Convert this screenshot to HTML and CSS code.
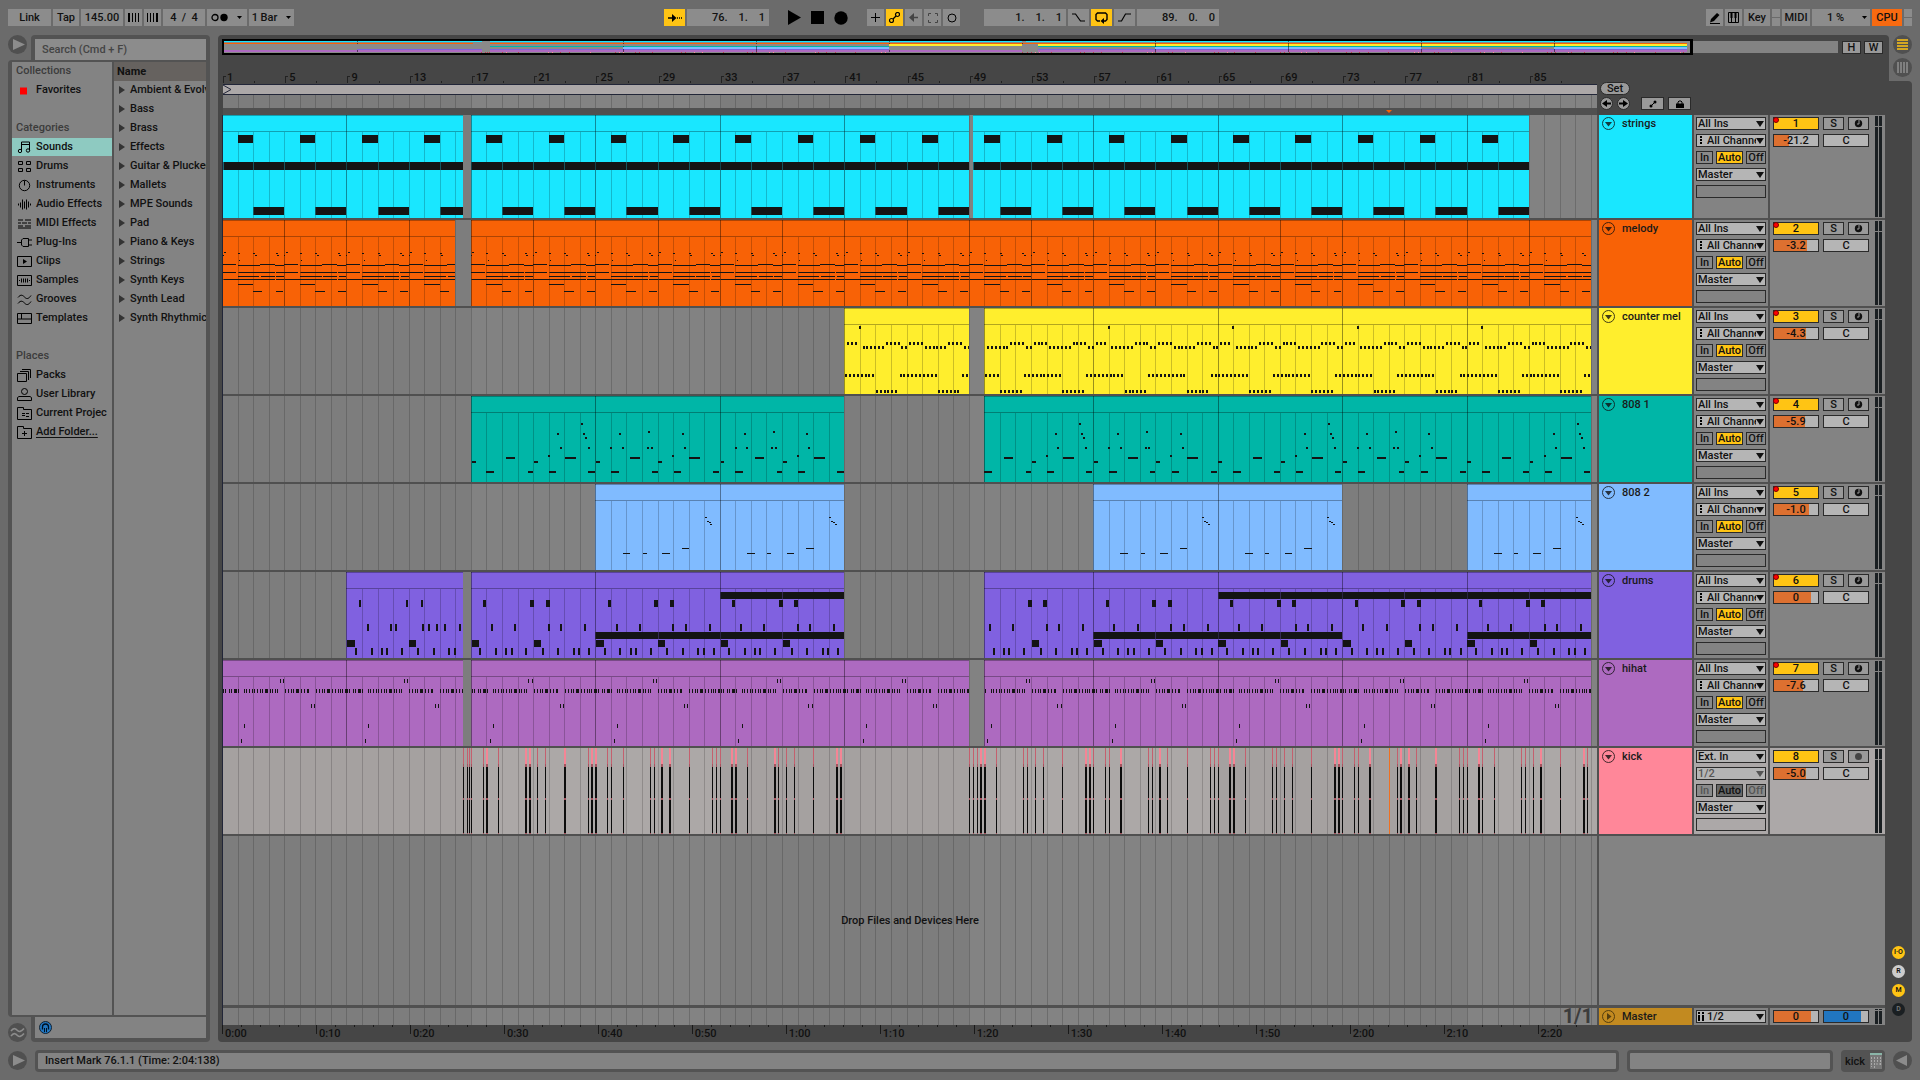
FILE: index.html
```html
<!DOCTYPE html>
<html lang="en">
<head>
<meta charset="utf-8">
<title>Arrangement</title>
<link rel="stylesheet" href="styles.css">
</head>
<body>
<header class="topbar">
  <div class="group">
    <button class="ctl w43">Link</button>
    <button class="ctl w26">Tap</button>
    <input class="ctl w42" aria-label="Tempo" value="145.00">
    <button class="ctl w17" aria-label="Nudge down"><svg width="11" height="9"><path d="M1 0v9M4.500 0v9M7.500 0v9M10.500 0v9" stroke="#000"/><path d="M1 0v9" stroke="#000" stroke-width="2"/></svg></button>
    <button class="ctl w17" aria-label="Nudge up"><svg width="11" height="9"><path d="M.5 0v9M3.500 0v9M6.500 0v9" stroke="#000"/><path d="M10 0v9" stroke="#000" stroke-width="2"/></svg></button>
    <input class="ctl w42" aria-label="Time signature" value="4  /  4">
    <button class="ctl w40" aria-label="Metronome"><svg width="32" height="9"><circle cx="4" cy="4.500" r="3" fill="none" stroke="#000" stroke-width="1.300"/><circle cx="13" cy="4.500" r="3.700"/><path d="M26 3h5l-2.500 3z"/></svg></button>
    <button class="ctl w45">1 Bar<svg class="after" width="5" height="4"><path d="M0 0h5l-2.500 3z"/></svg></button>
  </div>
  <div class="space-a"></div>
  <div class="group">
    <button class="ctl w21 on" aria-label="Follow"><svg width="14" height="10"><path d="M0 5h6M9 5h1M11 5h1M13 5h1" stroke="#000" stroke-width="1.500"/><path d="M4 1l4.500 4L4 9z"/></svg></button>
    <input class="ctl w82 num" aria-label="Position" value="76.    1.    1">
    <div class="transport">
      <button class="bare" aria-label="Play"><svg width="13" height="15"><path d="M0 0l13 7.500L0 15z"/></svg></button>
      <button class="bare" aria-label="Stop"><svg width="13" height="13"><path d="M0 0h13v13H0z"/></svg></button>
      <button class="bare" aria-label="Record"><svg width="14" height="14"><circle cx="7" cy="7" r="6.700"/></svg></button>
    </div>
    <button class="ctl w17" aria-label="Overdub"><svg width="9" height="9"><path d="M4.500 0v9M0 4.500h9" stroke="#000"/></svg></button>
    <button class="ctl w17 on" aria-label="Automation arm"><svg width="11" height="11" fill="none" stroke="#000" stroke-width="1.200"><circle cx="2.500" cy="8.500" r="2"/><circle cx="8.500" cy="2.500" r="2"/><path d="M4 7l3-3"/></svg></button>
    <button class="ctl w17" aria-label="Re-enable automation"><svg width="9" height="9"><path d="M2 4.500h7" stroke="#444" stroke-width="1.500"/><path d="M5 0v9L0 4.500z" fill="#444"/></svg></button>
    <button class="ctl w17" aria-label="Capture"><svg width="10" height="10"><path d="M.5 3V.5H3M7 .5h2.500V3M9.500 7v2.500H7M3 9.500H.5V7" fill="none" stroke="#444"/></svg></button>
    <button class="ctl w17" aria-label="Session record"><svg width="10" height="10"><circle cx="5" cy="5" r="4" fill="none" stroke="#000"/></svg></button>
    <div class="gap20"></div>
    <input class="ctl w82 num" aria-label="Loop start" value="1.    1.    1">
    <button class="ctl w21" aria-label="Punch in"><svg width="13" height="9"><path d="M0 1h3.500l5 7H13" fill="none" stroke="#000" stroke-width="1.200"/></svg></button>
    <button class="ctl w21 on" aria-label="Loop"><svg width="13" height="12"><path d="M5 9H2.500L1 7.500V2.500L2.500 1h8L12 2.500v5L10.500 9H8" fill="none" stroke="#000" stroke-width="1.400"/><path d="M9 6v6L5.500 9z"/></svg></button>
    <button class="ctl w21" aria-label="Punch out"><svg width="13" height="9"><path d="M0 8h3.500l4-7H13" fill="none" stroke="#000" stroke-width="1.200"/></svg></button>
    <input class="ctl w82 num" aria-label="Loop length" value="89.    0.    0">
  </div>
  <div class="space-b"></div>
  <div class="group">
    <button class="ctl w17" aria-label="Draw mode"><svg width="12" height="12"><path d="M1 10.500l1-3.500L8 1l2.500 2L5 9z"/><path d="M1 11.500h10" stroke="#000"/></svg></button>
    <button class="ctl w17" aria-label="Computer keyboard"><svg width="11" height="11"><path d="M.5.5h10v10H.5z" fill="none" stroke="#000"/><path d="M2.500 0h2v6h-2zM6.500 0h2v6h-2zM3 6h1v5H3zM7 6h1v5H7z"/></svg></button>
    <button class="ctl w26">Key</button>
    <div class="leds"><i></i><i></i></div>
    <button class="ctl w28">MIDI</button>
    <button class="ctl w58 load">1 %<svg width="5" height="4"><path d="M0 0h5l-2.500 3z"/></svg></button>
    <button class="ctl w30 cpu">CPU</button>
    <div class="leds"><i></i><i></i></div>
  </div>
</header>

<main class="main">
  <aside class="browser">
    <div class="btop">
      <button class="round" aria-label="Hide browser"><svg width="19" height="19"><path d="M5 4l12 5.500L5 15z" fill="#8c8c8c"/></svg></button>
      <div class="tab"><input class="search" aria-label="Search" placeholder="Search (Cmd + F)"></div>
    </div>
    <div class="panes">
      <ul class="pane places">
        <li class="head">Collections</li>
        <li><svg class="ic" viewBox="0 0 15 12"><path d="M3 3h7v7H3z" fill="#f00" stroke="none"/></svg>Favorites</li>
        <li></li>
        <li class="head">Categories</li>
        <li class="sel"><svg class="ic" viewBox="0 0 15 12"><circle cx="3" cy="9.500" r="1.700"/><circle cx="11" cy="9" r="1.700"/><path d="M4.500 9.500v-9h8V9M4.500 3h8"/></svg>Sounds</li>
        <li><svg class="ic" viewBox="0 0 15 12"><path d="M1.500 1h4v3h-4zM9.500 1h4v3h-4zM1.500 8h4v3h-4zM9.500 8h4v3h-4z"/></svg>Drums</li>
        <li><svg class="ic" viewBox="0 0 15 12"><circle cx="7.500" cy="6" r="5.200"/><path d="M7.500 1v5"/></svg>Instruments</li>
        <li><svg class="ic" viewBox="0 0 15 12"><path d="M1.500 5v2M3.500 4v5M5.500 1v10M7.500 3v7M9.500 1v10M11.500 3v6M13.500 5v2"/></svg>Audio Effects</li>
        <li><svg class="ic" viewBox="0 0 15 12"><path d="M1 2.500h5M8 2.500h6M1 5.500h3M5 5.500h5M11 5.500h3M1 8.500h5M1 10.500h13M8 8.500h6"/></svg>MIDI Effects</li>
        <li><svg class="ic" viewBox="0 0 15 12"><path d="M0 6h4.500M11 3.500h4M11 8.500h4M11.500 2H6L4.500 3.500v5L6 10h5.500z"/></svg>Plug-Ins</li>
        <li><svg class="ic" viewBox="0 0 15 12"><path d="M.5 1h14v10H.5z"/><path d="M6 3.500L10 6 6 8.500z" fill="#000" stroke="none"/></svg>Clips</li>
        <li><svg class="ic" viewBox="0 0 15 12"><path d="M.5 1h14v10H.5zM2.500 5.500v1M4.500 4v4M6.500 4v4M8.500 4v4M10.500 4v4M12.500 5.500v1"/></svg>Samples</li>
        <li><svg class="ic" viewBox="0 0 15 12"><path d="M1 4c3-4 5-2 7 0s4 1 6-2M1 10c3-4 5-2 7 0s4 1 6-2"/></svg>Grooves</li>
        <li><svg class="ic" viewBox="0 0 15 12"><path d="M.5 1h14v10H.5zM.5 6.500h14M4.500 1v5.500"/></svg>Templates</li>
        <li></li>
        <li class="head">Places</li>
        <li><svg class="ic" viewBox="0 0 15 13"><path d="M.5 4.500h9v8h-9zM3 2.500h8.500V11M5 .5h8.500V9"/></svg>Packs</li>
        <li><svg class="ic" viewBox="0 0 15 13"><circle cx="7.500" cy="3.500" r="3"/><path d="M.5 12.500v-3L2 8.500h11l1.500 1v3z"/></svg>User Library</li>
        <li><svg class="ic" viewBox="0 0 15 13"><path d="M.5 12.500V.5h6v2h8v10zM5 6.500h3M9 6.500h3M5 8.500h3M9 9.500h3"/></svg>Current Projec</li>
        <li><svg class="ic" viewBox="0 0 15 13"><path d="M.5 12.500V.5h6v2h8v10zM7.500 5v5M5 7.500h5"/></svg><a class="add" href="#add">Add Folder...</a></li>
      </ul>
      <ul class="pane names">
        <li class="title">Name</li>
        <li>Ambient &amp; Evolving</li><li>Bass</li><li>Brass</li><li>Effects</li><li>Guitar &amp; Plucked</li><li>Mallets</li><li>MPE Sounds</li><li>Pad</li><li>Piano &amp; Keys</li><li>Strings</li><li>Synth Keys</li><li>Synth Lead</li><li>Synth Rhythmic</li>
      </ul>
    </div>
    <div class="bbot">
      <button class="round" aria-label="Groove pool"><svg width="19" height="19" fill="none" stroke="#8c8c8c" stroke-width="1.600"><path d="M3 8c3-4 5-2 6.500-.5S13 9 16 5.500M3 13c3-4 5-2 6.500-.5s3.500 1.500 6.500-2"/></svg></button>
      <div class="tab low"><div class="preview"><button class="bare" aria-label="Preview"><svg width="13" height="13"><circle cx="6.500" cy="6.500" r="6" fill="#2176c0" stroke="#123"/><path d="M3.500 8.500V6a3 3 0 0 1 6 0v2.500" fill="none" stroke="#012" stroke-width="1.300"/><path d="M5 7h1v4H5zM7 7h1v4H7z" fill="#012"/></svg></button></div></div>
    </div>
  </aside>

  <section class="arranger">
    <div class="overview">
      <div class="ovmap"><div class="ovbox" id="overview"></div></div>
      <div class="ovbtns"><button class="small w19">H</button><button class="small w19">W</button></div>
    </div>
    <div class="rulers">
      <div class="rleft">
        <div class="bars" id="bars"></div>
        <div class="locators"><svg width="10" height="9"><path d="M0 0l8 4.500L0 9" fill="none" stroke="#222638"/></svg></div>
        <div class="scrub" id="scrub"></div>
        <div class="marks"><svg viewBox="0 0 1374 7" preserveAspectRatio="none"><path d="M1163 2h6l-3 3z" fill="#f86206"/></svg></div>
      </div>
      <div class="rright">
        <button class="small pill">Set</button>
        <div class="rbtns">
          <button class="small dot" aria-label="Previous locator"><svg width="9" height="9"><path d="M3 4.500h6" stroke="#000" stroke-width="2"/><path d="M5 1v7L0 4.500z"/></svg></button>
          <button class="small dot" aria-label="Next locator"><svg width="9" height="9"><path d="M0 4.500h6" stroke="#000" stroke-width="2"/><path d="M4 1v7l5-3.500z"/></svg></button>
          <button class="small w23 first" aria-label="Automation mode"><svg width="8" height="8"><path d="M1.500 6.500l5-5" stroke="#000"/><circle cx="2" cy="6" r="1.500"/><circle cx="6" cy="2" r="1.500"/></svg></button>
          <button class="small w23" aria-label="Lock envelopes"><svg width="8" height="8"><path d="M0 3.500h8V8H0z"/><path d="M2 4V2l1-1h2l1 1v2" fill="none" stroke="#000"/></svg></button>
        </div>
      </div>
    </div>
    <div class="tracks" id="tracks"></div>
    <div class="row drop">
      <div class="lane" id="droplane"><p class="hint">Drop Files and Devices Here</p></div>
      <div class="blank"></div>
    </div>
    <div class="row master">
      <div class="lane" id="masterlane"><b class="zoomlabel">1/1</b></div>
      <div class="name"><button class="fold" aria-label="Unfold Master"><svg width="13" height="13"><circle cx="6.500" cy="6.500" r="6" fill="none" stroke="#3a2c0c"/><path d="M5 3l4.500 3.500L5 10z" fill="#3a2c0c"/></svg></button>Master</div>
      <div class="io"><span class="pick"><svg class="chan" width="6" height="9"><path d="M0 0h2v2H0zM0 3h2v6H0zM4 0h2v2H4zM4 3h2v6H4z"/></svg><select class="indent" aria-label="Master output"><option>1/2</option></select></span></div>
      <div class="mix"><div class="mrow"><input class="val" aria-label="Master volume" value="0" style="--fill:83%"><input class="val pan" aria-label="Cue volume" value="0" style="--fill:83%"></div><div class="meter"><i></i><i></i></div></div>
    </div>
    <div class="times" id="times"></div>
  </section>
  <nav class="strip">
    <div class="views">
      <button class="round" aria-label="Arrangement view"><svg width="19" height="19"><path d="M4 5h11M4 8h11M4 11h11M4 14h11" stroke="#ffc414" stroke-width="1.600"/></svg></button>
      <button class="round" aria-label="Session view"><svg width="19" height="19"><path d="M5 4v11M8 4v11M11 4v11M14 4v11" stroke="#8c8c8c" stroke-width="1.600"/></svg></button>
    </div>
    <div class="toggles"><button class="tg y">I·O</button><button class="tg w">R</button><button class="tg y">M</button><button class="tg d">D</button></div>
  </nav>
</main>

<footer class="status">
  <button class="round" aria-label="Info view"><svg width="19" height="19"><path d="M5 4l12 5.500L5 15z" fill="#8c8c8c"/></svg></button>
  <div class="box msg">Insert Mark 76.1.1 (Time: 2:04:138)</div>
  <div class="box aux"></div>
  <div class="device">kick<svg width="12" height="16"><path d="M0 0h12v16H0z" fill="#777"/><path d="M0 0h12v2H0z" fill="#8ab5a8"/><path d="M1.500 4v10M4.500 4v11M7.500 4v5M10.500 4v9M6 11h5" stroke="#aaa" stroke-dasharray="2 1"/></svg></div>
  <button class="round" aria-label="Device view"><svg width="19" height="19"><path d="M14 4L3 9.500 14 15z" fill="#8c8c8c"/></svg></button>
</footer>
<script src="app.js"></script>
</body>
</html>
```

FILE: styles.css
```css
* { box-sizing: border-box; margin: 0; padding: 0; }
body {
  min-height: 100vh; display: flex; flex-direction: column;
  background: #6b6b6b; color: #111; overflow-x: hidden;
  font: 500 11px/13px Roboto, "Liberation Sans", sans-serif;
}
button, input, select { font: inherit; color: inherit; border: 0; border-radius: 0; background: none; outline: 0; }
ul { list-style: none; }
svg { display: block; flex: none; }

.topbar { display: flex; padding: 9px 8px; height: 35px; }
.group { display: flex; gap: 2px; }
.space-a { flex: 19; }
.space-b { flex: 25; }
.ctl { height: 17px; background: #8c8c8c; display: flex; align-items: center; justify-content: center; text-align: center; white-space: pre; }
.ctl.on { background: #ffc414; }
.ctl .after { margin-left: 9px; }
.num { text-align: right; padding-right: 4px; }
.w17 { width: 17px; } .w19 { width: 19px; } .w21 { width: 21px; } .w23 { width: 23px; } .w26 { width: 26px; }
.w28 { width: 28px; } .w30 { width: 30px; } .w40 { width: 40px; } .w42 { width: 42px; } .w43 { width: 43px; }
.w45 { width: 45px; } .w58 { width: 58px; } .w82 { width: 82px; }
.cpu { background: #f86a10; }
.load { gap: 18px; justify-content: flex-end; padding-right: 3px; }
.gap20 { width: 20px; }
.bare { display: flex; }
.transport { display: flex; align-items: center; gap: 10px; margin: 0 17px; }
.leds { display: flex; flex-direction: column; gap: 1px; width: 8px; }
.leds i { flex: 1; background: #8c8c8c; }
.round { width: 19px; height: 19px; border-radius: 50%; background: #505050; flex: none; }

.main { flex: 1; display: flex; padding: 0 8px; }
.browser { width: 202px; margin-right: 8px; display: flex; flex-direction: column; flex: none; }
.btop, .bbot { display: flex; justify-content: space-between; height: 25px; }
.bbot { align-items: flex-end; }
.tab { width: 179px; height: 25px; background: #535353; padding: 4px 4px 0; border-radius: 4px 4px 0 0; }
.tab.low { padding: 0 4px 4px; border-radius: 0 0 4px 4px; }
.search { width: 171px; height: 21px; background: #8c8c8c; padding: 0 7px; }
.search::placeholder { color: #444; opacity: 1; }
.preview { height: 21px; background: #838383; padding: 4px; }
.panes { flex: 1; display: flex; gap: 2px; padding: 2px 4px; background: #535353; border-radius: 4px 0 0 4px; }
.pane { background: #838383; overflow: hidden; }
.places { width: 100px; }
.names { flex: 1; }
.pane li { height: 18px; margin-bottom: 1px; display: flex; align-items: center; gap: 4px; padding-left: 5px; white-space: nowrap; line-height: 14px; }
.pane .head { color: #3c3c3c; padding-left: 4px; }
.pane .sel { background: #8ecac1; }
.ic { width: 15px; height: 13px; fill: none; stroke: #000; }
.add { color: inherit; text-decoration: underline; text-underline-offset: 2px; }
.names li::before { content: ""; border: solid transparent; border-width: 4px 0 4px 6px; border-left-color: #333; margin-right: 1px; }
.names .title { background: #66625f; height: 19px; margin: 0; padding-left: 3px; font-weight: 700; }
.names .title::before { display: none; }

.arranger { flex: 1; min-width: 0; display: flex; flex-direction: column; background: #464646; border-radius: 4px 4px 0 4px; padding: 4px 4px 0; }
.overview { display: flex; gap: 4px; height: 16px; align-items: center; }
.ovmap { flex: 1; height: 12px; background: #838383; display: flex; align-items: center; }
.ovbox { width: 91%; height: 16px; border: solid #000; border-width: 2px 3px 2px 2px; background: #8a8a8a; flex: none; }
.ovbox svg { width: 100%; height: 12px; }
.ovbtns { display: flex; gap: 3px; padding-right: 2px; }
.small { height: 13px; line-height: 11px; border: 1px solid #2a2a2a; background: #999; display: flex; align-items: center; justify-content: center; }
.rulers { display: grid; grid-template-columns: 1fr 286px; column-gap: 2px; margin-left: 1px; height: 60px; }
.rleft { min-width: 0; display: flex; flex-direction: column; }
.bars { height: 29px; display: flex; padding-right: 5px; align-items: flex-end; }
.bar { flex: 1; min-width: 0; height: 13px; padding-left: 4px; position: relative; }
.bar::before { content: ""; position: absolute; left: 0; bottom: 1px; width: 2px; height: 6px; border: solid #222; border-width: 1px 0 0 1px; }
.bar::after { content: ""; position: absolute; left: 50%; bottom: 1px; width: 1px; height: 2px; background: #222; }
.locators { height: 11px; background: #aca8a8; border: solid #222638; border-width: 1px 0; }
.scrub { height: 13px; }
.scrub svg, .lane svg, .marks svg { width: 100%; height: 100%; }
.marks { height: 7px; background: #505050; }
.rright { padding: 27px 0 0 1px; display: flex; flex-direction: column; gap: 2px; }
.pill { width: 30px; border-radius: 7px; }
.dot { width: 13px; border-radius: 50%; }
.rbtns { display: flex; gap: 4px; }
.first { margin-left: 7px; }

.tracks { display: flex; flex-direction: column; }
.row { display: grid; grid-template-columns: 1fr 93px 74px 115px; column-gap: 2px; height: 88px; padding-bottom: 2px; background: #505050; border-left: 1px solid #222638; }
.row.tall { height: 105px; }
.lane { min-width: 0; background: #7e7e7e; position: relative; overflow: hidden; }
.lane svg { position: absolute; inset: 0; }
.name { background: var(--c); display: flex; align-items: flex-start; gap: 7px; padding: 2px 3px; overflow: hidden; white-space: nowrap; color: #1a1a1a; }
.fold { width: 13px; height: 13px; opacity: .8; flex: none; }
.io { background: #838383; padding: 2px; display: flex; flex-direction: column; gap: 4px; }
.hl .io, .hl .mix { background: #aca8a8; }
.pick { position: relative; height: 13px; display: block; border: 1px solid #2a2a2a; background: #b5b5b5; }
.pick::after { content: ""; position: absolute; right: 1px; top: 3px; border: solid transparent; border-width: 6px 4px 0; border-top-color: #111; pointer-events: none; }
.pick select { appearance: none; display: block; width: 59px; height: 11px; line-height: 11px; padding-left: 1px; overflow: hidden; }
.pick select.indent { padding-left: 10px; }
.pick.off { color: #555; }
.pick.off::after { border-top-color: #555; }
.chan { position: absolute; left: 1px; top: 1px; }
.mon { display: flex; gap: 3px; justify-content: space-between; }
.mon .small { background: #8a8a8a; }
.mon .small:nth-child(1) { width: 17px; } .mon .small:nth-child(2) { width: 27px; } .mon .small:nth-child(3) { width: 20px; }
.mon .on, .mon .small.on, .mix .on { background: #ffc414; }
.mon.off .small { color: #555; }
.mon.off .small.on { background: #686868; color: #111; }
.slot { width: 70px; height: 13px; border: 1px solid #2a2a2a; }
.mix { background: #838383; padding: 2px 3px 0; display: grid; grid-template-columns: 96px 7px; column-gap: 6px; grid-template-rows: 13px 13px 1fr; row-gap: 4px; }
.mrow { display: flex; gap: 4px; }
.mix .w46 { width: 46px; position: relative; }
.arm { position: absolute; left: -1px; top: -1px; width: 6px; height: 6px; border-radius: 50%; background: #f00; border: 1px solid #700; }
.val { width: 46px; height: 13px; border: 1px solid #2a2a2a; text-align: center; line-height: 11px; background: linear-gradient(90deg, #dd7030 var(--fill), #b5b5b5 0); }
.val.pan { background: linear-gradient(90deg, #2176c0 var(--fill), #b5b5b5 0); }
.val.c { background: #b5b5b5; }
.meter { grid-column: 2; grid-row: 1 / 4; display: flex; gap: 1px; margin: -1px 0 1px; }
.meter i { flex: 1; background: linear-gradient(#1a1f22 10px, #838383 10px, #838383 11px, #1a1f22 11px); }
.drop { flex: 1; height: auto; min-height: 60px; grid-template-columns: 1fr 286px; padding-bottom: 3px; }
.blank { background: #838383; }
.hint { position: relative; height: 100%; display: flex; align-items: center; justify-content: center; }
.master { height: 17px; padding: 0; --c: #c28a20; }
.master .mix { grid-template-rows: 13px; }
.master .meter { grid-row: 1; margin-bottom: -1px; }
.master .meter i { background: linear-gradient(#1a1f22 1px, #838383 1px, #838383 2px, #1a1f22 2px); }
.zoomlabel { position: absolute; right: 4px; top: 0; font-size: 20px; line-height: 17px; font-weight: 700; color: #3c3c3c; }
.times { height: 17px; display: flex; margin-right: 293px; }
.time { flex: 10; min-width: 0; padding: 2px 0 0 2px; border-left: 1px solid #1a1a1a; height: 9px; background: repeating-linear-gradient(90deg, transparent 0 18px, #1a1a1a 18px 19px) 0 0 / 100% 2px no-repeat; }
.time.last { flex: 5.655; }

.strip { width: 23px; display: flex; flex-direction: column; }
.views { height: 46px; padding-left: 4px; display: flex; flex-direction: column; gap: 4px; }
.toggles { flex: 1; background: #464646; border-radius: 0 4px 4px 0; display: flex; flex-direction: column; justify-content: flex-end; gap: 6px; padding: 0 0 26px 3px; }
.tg { width: 13px; height: 13px; border-radius: 50%; font-size: 7px; line-height: 13px; font-weight: 600; text-align: center; }
.y { background: #ffc414; } .w { background: #ccc; } .d { background: #1a1f22; color: #777; }

.status { display: flex; gap: 8px; padding: 8px; height: 38px; }
.status .round { margin-top: 1px; }
.box { border: 3px solid #535353; border-radius: 4px; background: #838383; height: 22px; line-height: 16px; padding-left: 7px; }
.msg { flex: 1; }
.aux { width: 206px; }
.device { width: 44px; height: 22px; background: #535353; border-radius: 4px; display: flex; align-items: center; justify-content: space-between; padding: 0 3px 0 4px; }
```

FILE: app.js
```js
const BAR = 15.557, WIDTH = 1374;
const X = b => Math.max(0, Math.floor((b - 1) * BAR - 0.5));
const rect = (x, y, w, h, f) => `<rect x="${x}" y="${y}" width="${w}" height="${h}" fill="${f}"/>`;
const svg = (w, h, body) => `<svg viewBox="0 0 ${w} ${h}" preserveAspectRatio="none" shape-rendering="crispEdges">${body}</svg>`;
const INK = '#141414';

function grid(h, dark, light) {
  let s = rect(0, 0, WIDTH, h, dark);
  for (const b of [17, 49, 81]) s += rect(X(b), 0, Math.min(X(b + 16), WIDTH) - X(b), h, light);
  for (let b = 2; b <= 89; b++) s += rect(X(b), 0, 1, h, 'rgba(0,0,0,.17)');
  return s;
}

// A note is [start bar, y, length in bars or 0, height, minimum pixel width].
const strings = b => [[1, 20, 1, 8], [0, 47, 2, 8], [2, 47, 2, 8], [2, 92, 2, 8]].map(n => [b + n[0], ...n.slice(1)]);
const melody = b => [
  [0, 35, 0, 1, 1], [.1, 32, 0, 1, 2], [1, 33, 0, 1, 2], [1.1, 40, 0, 1, 1], [2, 33, 0, 1, 2], [2.1, 35, 0, 1, 2],
  [3.45, 33, 0, 1, 2], [3.55, 35, 0, 1, 2], [0, 44, .9, 1], [1, 45, 1.45, 1], [2.45, 44, .95, 1], [3.4, 45, .6, 1],
  [0, 52, .9, 1], [1, 52, 2.4, 1], [3.45, 52, .55, 1], [1, 56, 1.4, 1], [2.5, 56, .9, 1], [3.5, 56, .5, 1],
  [0, 59, 3.4, 1], [3.45, 59, .55, 1], [1, 64, 1, 1], [2, 71, .6, 1], [3.45, 71, .5, 1]
].map(n => [b + n[0], ...n.slice(1)]);
const span = (a, z) => Array.from({ length: z - a + 1 }, (_, i) => a + i);
const counter = b => [
  ...[3.8].map(s => [s, 18]),
  ...[...span(0, 2), ...span(10, 13), ...span(16, 19), ...span(26, 29)].map(s => [s + .7, 34]),
  ...[...span(4, 9), 14, 15, ...span(20, 25), 30, 31].map(s => [s + .7, 38]),
  ...[...span(0, 7), ...span(14, 23), 30, 31].map(s => [s + .2, 66]),
  ...[...span(8, 13), ...span(24, 29)].map(s => [s + .1, 82])
].map(([s, y]) => [b + s / 4, y, 0, 3, 2]);
const low1 = b => {
  const base = [[.05, 65, .25], [4.05, 65, .25], [1, 75, .5], [3.65, 75, .35], [5.05, 75, .45], [7.55, 75, .4], [2.25, 61, .6], [6.05, 61, .7],
    [4.95, 59, 0], [5.55, 37, 0], [5.7, 51, 0]];
  const a = [[7.1, 27, 0], [7.2, 37, 0], [7.35, 41, 0], [7.5, 51, 0]];
  const c = [[.95, 51, 0], [1.55, 37, 0], [1.7, 51, 0], [3.3, 51, 0], [3.4, 35, 0], [3.55, 51, 0]];
  return base.concat([17, 49, 65, 81].includes(b) ? a : c).map(n => [b + n[0], n[1], n[2], 2, 2]);
};
const low2 = b => [[7.02, 33, 0], [7.15, 37, 0], [7.28, 38, 0], [7.4, 40, 0], [5.55, 64, .5], [1.75, 69, .5], [3.05, 69, .25], [4.3, 69, .5]]
  .map(n => [b + n[0], n[1], n[2], 1, 2]);
const drums = b => {
  const first = b === 9, n = [];
  n.push([.8, 28, 0, 7, first ? 2 : 3], [3.8, 28, 0, 7, first ? 2 : 4], [4.8, 28, 0, 7, first ? 2 : 4]);
  for (const s of first ? [1.3, 2.8, 3.15, 4.85, 5.25, 5.75, 6.3, 7.25] : [1.3, 2.8, 4.95, 5.75, 7.3]) n.push([s, 52, 0, 7, 2]);
  for (const s of [.55, 1.55, 2.2, 2.55, 3.5, 4.55, 5.55, 6.55, 6.9, 7.55]) n.push([s, 76, 0, 7, 2]);
  n.push([.05, 68, .5, 7], [4.05, 68, .45, 7]);
  if ([25, 33, 57, 65, 81].includes(b)) n.push([0, 60, 4, 7], [4, 60, 4, 7]);
  if ([33, 65, 73, 81].includes(b)) n.push([0, 20, 4, 7], [4, 20, 4, 7]);
  return n.map(m => [b + m[0], ...m.slice(1)]);
};
const hats = [0, 2, 6, 8, [11, 3], 15, 21, 23, 26, 29, 31, 34, 37, 39, [42, 3], 47, 49, 52, 54, 62, 65, 68, 70, [73, 3], 78, 81, [84, 2], 93, 96, 99, 101, [104, 3], 109, 112, 115, 117, 119, [122, 2]];
const hihat = b => [
  ...hats.map(h => Array.isArray(h) ? [h[0] / BAR, 29, 0, 4, h[1]] : [h / BAR, 29, 0, 4, 1]),
  [3.65, 19, 0, 4, 1], [3.85, 19, 0, 4, 1], [5.65, 44, 0, 4, 1], [5.85, 44, 0, 4, 1], [1.35, 64, 0, 4, 1], [1.15, 79, 0, 4, 1]
].map(n => [b + n[0] + .05, ...n.slice(1)]);

// Kick samples, in lane pixels; the second list holds the doubled hits.
const kicks = [240, 244, 246, 248, 260, 275, 314, 322, 365, 384, 388, 400, 427, 431, 466, 489, 493, 497, 524, 555, 563, 571, 590,
  746, 750, 754, 773, 800, 804, 812, 820, 839, 870, 882, 886, 925, 929, 944, 964, 987, 991, 995, 1022, 1049, 1053, 1061, 1069, 1088,
  1119, 1131, 1135, 1174, 1193, 1236, 1240, 1244, 1259, 1271, 1298, 1302, 1310, 1337, 1364];
const doubles = [264, 303, 307, 342, 369, 373, 439, 447, 509, 513, 552, 614, 618, 758, 762, 863, 867, 898, 937, 1007, 1011, 1112, 1116,
  1147, 1178, 1186, 1213, 1256, 1318, 1361];

const tracks = [
  { name: 'strings', c: '#19e7ff', vol: '-21.2', fill: 34, h: 103, unit: 4, notes: strings, edge: 8, clips: [[1, 16.5], [17, 49], [49.25, 85]] },
  { name: 'melody', c: '#f86206', vol: '-3.2', fill: 76, unit: 4, notes: melody, edge: 4, clips: [[1, 16], [17, 89]] },
  { name: 'counter mel', c: '#ffee2d', vol: '-4.3', fill: 73, unit: 8, notes: counter, edge: 8, clips: [[41, 49], [50, 89]] },
  { name: '808 1', c: '#00b6a7', vol: '-5.9', fill: 70, unit: 8, notes: low1, edge: 8, clips: [[17, 41], [50, 89]] },
  { name: '808 2', c: '#80bbff', vol: '-1.0', fill: 80, unit: 8, notes: low2, edge: 8, clips: [[25, 41], [57, 73], [81, 89]] },
  { name: 'drums', c: '#8061e0', vol: '0', fill: 83, unit: 8, notes: drums, edge: 8, clips: [[9, 16.5], [17, 41], [50, 89]] },
  { name: 'hihat', c: '#ad6ac0', vol: '-7.6', fill: 65, unit: 8, notes: hihat, edge: 8, clips: [[1, 16.5], [17, 49], [50, 89]] },
  { name: 'kick', c: '#ff8799', vol: '-5.0', fill: 72, audio: true, clips: [] }
];

function lane(t) {
  const h = t.h || 86;
  let s = t.audio ? grid(h, '#a5a1a0', '#aca8a7') : grid(h, '#7d7d7d', '#828282');
  for (const [a, z] of t.clips) {
    const x0 = X(a), x1 = X(z), w = x1 - x0;
    s += rect(x0, 0, w, h, t.c) + rect(x0, 0, w, 1, 'rgba(0,0,0,.3)') + rect(x0, 16, w, 1, 'rgba(0,0,0,.3)');
    for (let b = Math.ceil(a); b < z; b++) {
      const edge = (b - 1) % t.edge === 0 || b === a;
      if (X(b) > 0) s += edge ? rect(X(b), 0, 1, h, 'rgba(0,0,0,.4)') : rect(X(b), 17, 1, h - 17, 'rgba(0,0,0,.2)');
    }
    for (let b = 1; b < z; b += t.unit) {
      if (b + t.unit <= a) continue;
      for (const [start, y, len, nh, min] of t.notes(b)) {
        if (start + len < a || (len === 0 && start < a) || start >= z) continue;
        const long = len > 1.9;
        const left = X(Math.max(start, a)) + (long ? 1 : 0);
        const right = Math.min(len ? X(start + len) : left + min, x1);
        if (right > left) s += rect(left, y, right - left, nh, INK);
        if (right > left && long) s += rect(left - 1, y, 1, nh, 'rgba(20,20,20,.6)');
      }
    }
  }
  if (t.audio) {
    const hit = (x, w, c) => rect(x, 0, w, 19, c) + rect(x, 16, w, 70, '#a5545f') + rect(x, 19, w, 31, '#0c0c0c') + rect(x, 52, w, 33, '#0c0c0c');
    for (const x of kicks) s += hit(x, 1, '#c4606e');
    for (const x of doubles) s += hit(x - 1, 2, '#f58595');
    s += rect(1166, 0, 1, h, '#f07020');
  }
  return svg(WIDTH, h, s);
}

document.getElementById('tracks').innerHTML = tracks.map((t, i) => `
  <div class="row${t.h ? ' tall' : ''}${t.audio ? ' hl' : ''}" style="--c:${t.c}">
    <div class="lane">${lane(t)}</div>
    <div class="name"><button class="fold" aria-label="Fold ${t.name}"><svg width="13" height="13"><circle cx="6.5" cy="6.5" r="6" fill="none" stroke="#111"/><path d="M3 5h7L6.500 9.500z" fill="#111"/></svg></button>${t.name}</div>
    <div class="io">
      <span class="pick"><select aria-label="${t.name} input"><option>${t.audio ? 'Ext. In' : 'All Ins'}</option></select></span>
      ${t.audio
        ? '<span class="pick off"><select aria-label="kick input channel"><option>1/2</option></select></span>'
        : `<span class="pick"><svg class="chan" width="6" height="9"><path d="M2 0h2v2H2zM2 3h2v2H2zM2 6h2v2H2z"/></svg><select class="indent" aria-label="${t.name} input channel"><option>All Channels</option></select></span>`}
      <div class="mon${t.audio ? ' off' : ''}"><button class="small">In</button><button class="small on">Auto</button><button class="small">Off</button></div>
      <span class="pick"><select aria-label="${t.name} output"><option>Master</option></select></span>
      <div class="slot"></div>
    </div>
    <div class="mix">
      <div class="mrow"><button class="small w46 on">${t.audio ? '' : '<i class="arm"></i>'}${i + 1}</button><button class="small w21">S</button><button class="small w21" aria-label="Arm ${t.name}">${t.audio
        ? '<svg width="9" height="9"><circle cx="4.500" cy="4.500" r="3.500" fill="#444"/></svg>'
        : '<svg width="9" height="9"><circle cx="4.500" cy="4.500" r="3.700" fill="#111"/><path d="M5 1v4H3" stroke="#999" fill="none"/></svg>'}</button></div>
      <div class="mrow"><input class="val" aria-label="${t.name} volume" value="${t.vol}" style="--fill:${t.fill}%"><input class="val c" aria-label="${t.name} pan" value="C"></div>
      <div class="meter"><i></i><i></i></div>
    </div>
  </div>`).join('');

document.getElementById('scrub').innerHTML = svg(WIDTH, 13, grid(13, '#7d7d7d', '#838383'));
document.getElementById('droplane').insertAdjacentHTML('afterbegin', svg(WIDTH, 169, grid(169, '#7d7d7d', '#838383')));
document.getElementById('masterlane').insertAdjacentHTML('afterbegin', svg(WIDTH, 17, grid(17, '#7d7d7d', '#838383')));

const O = b => Math.round((b - 1) * 16.62);
let map = '';
tracks.forEach((t, i) => {
  const y = [0, 2, 3, 5, 6, 8, 9][i], hh = [1, 1, 2, 1, 2, 1, 2][i];
  for (const [a, z] of t.clips) {
    map += rect(O(a), y, O(z) - O(a), hh, t.c);
    for (let b = Math.ceil(a / 8) * 8 + 1; b < z; b += 8) map += rect(O(b), y, 1, hh, 'rgba(0,0,0,.5)');
  }
});
kicks.forEach(x => { map += rect(Math.round(x * 1.07), 11, 1, 1, '#b83a4a'); });
doubles.forEach(x => { map += rect(Math.round(x * 1.07), 11, 1, 1, '#ff8799'); });
document.getElementById('overview').innerHTML = svg(1466, 12, map);

document.getElementById('bars').innerHTML = Array.from({ length: 22 }, (_, i) => `<div class="bar">${i * 4 + 1}</div>`).join('');
document.getElementById('times').innerHTML = Array.from({ length: 15 }, (_, i) =>
  `<div class="time${i === 14 ? ' last' : ''}">${Math.floor(i / 6)}:${i % 6}0</div>`).join('');
```
